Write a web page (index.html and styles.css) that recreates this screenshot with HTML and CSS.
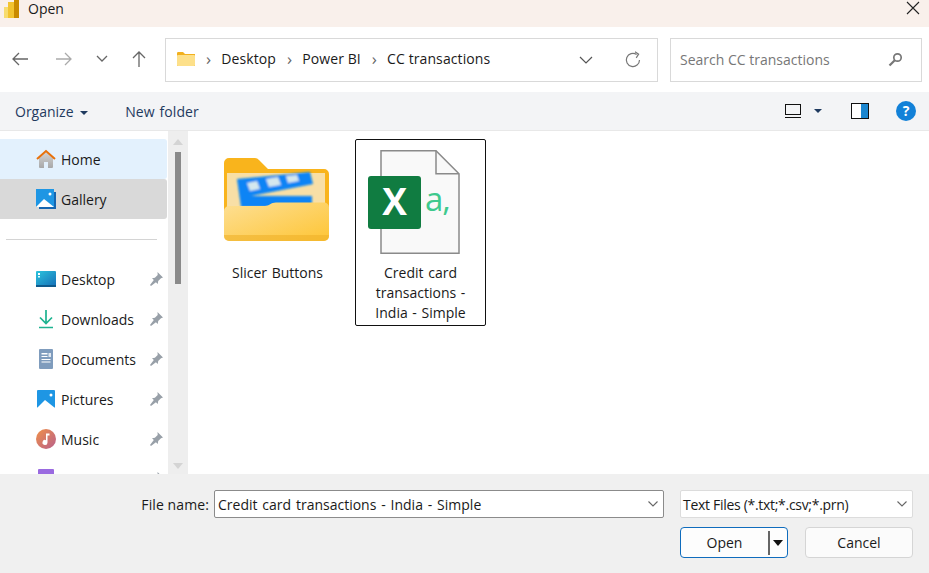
FILE: index.html
```html
<!DOCTYPE html>
<html lang="en">
<head>
  <meta charset="UTF-8" />
  <title>Open</title>
  <link rel="stylesheet" href="styles.css">
</head>
<body>
  <div class="dialog">
    <div class="titlebar">
      <svg class="app-icon" width="15" height="18" viewBox="0 0 15 18"><rect x="10" y="-4" width="5" height="22" fill="#c98a00"/><rect x="4" y="2" width="6" height="16" fill="#f2c330"/><rect x="0" y="7" width="4" height="11" fill="#f7dc6f"/></svg>
      <span class="title">Open</span>
      <svg class="close" width="14" height="14" viewBox="0 0 14 14"><path d="M1 1L13 13M13 1L1 13" stroke="#222" stroke-width="1.1" fill="none"/></svg>
    </div>

    <div class="addressbar">
      <div class="navbtns">
        <svg width="18" height="16" viewBox="0 0 18 16"><path d="M17 8H2M8 2L2 8l6 6" stroke="#666" stroke-width="1.3" fill="none"/></svg>
        <svg width="18" height="16" viewBox="0 0 18 16"><path d="M1 8h15M10 2l6 6-6 6" stroke="#aaa" stroke-width="1.3" fill="none"/></svg>
        <svg width="12" height="8" viewBox="0 0 12 8"><path d="M1 1l5 5 5-5" stroke="#666" stroke-width="1.3" fill="none"/></svg>
        <svg width="16" height="18" viewBox="0 0 16 18"><path d="M8 17V2M2 8l6-6 6 6" stroke="#666" stroke-width="1.3" fill="none"/></svg>
      </div>
      <div class="path">
        <svg width="18" height="14" viewBox="0 0 18 14"><path d="M0 1.500C0 .7.5 0 1 0h5l2 2h10v12H1c-.6 0-1-.5-1-1z" fill="#f2b01e"/><rect y="3" width="18" height="11" rx="1" fill="#fde08a"/></svg>
        <span class="sep">›</span><span>Desktop</span>
        <span class="sep">›</span><span>Power BI</span>
        <span class="sep">›</span><span>CC transactions</span>
        <svg class="path-down" width="14" height="8" viewBox="0 0 14 8"><path d="M1 1l6 6 6-6" stroke="#555" stroke-width="1.2" fill="none"/></svg>
        <svg class="refresh" width="18" height="18" viewBox="0 0 18 18"><path d="M15.500 9A6.600 6.600 0 1 1 12.600 3.500" stroke="#777" stroke-width="1.2" fill="none"/><path d="M11 .8l3.600 2.400-2.400 3.600" stroke="#777" stroke-width="1.2" fill="none"/></svg>
      </div>
      <div class="search">
        <span>Search CC transactions</span>
        <svg width="15" height="15" viewBox="0 0 15 15"><circle cx="9.500" cy="5.500" r="3.700" stroke="#777" stroke-width="1.700" fill="none"/><path d="M6.800 8.200L1.500 13.500" stroke="#777" stroke-width="2.200"/></svg>
      </div>
    </div>

    <div class="toolbar">
      <span class="tool">Organize <i class="caret"></i></span>
      <span class="tool new-folder">New folder</span>
      <div class="tool-icons">
        <svg width="16" height="16" viewBox="0 0 16 16"><rect x=".5" y="1.500" width="15" height="10" fill="none" stroke="#111"/><path d="M0 14.500h16" stroke="#111"/></svg>
        <i class="caret view-caret"></i>
        <svg class="preview" width="18" height="16" viewBox="0 0 18 16"><rect x=".5" y=".5" width="17" height="15" fill="#fff" stroke="#111"/><rect x="10" y="1" width="7" height="14" fill="#1a86d0"/></svg>
        <span class="help">?</span>
      </div>
    </div>

    <div class="main">
      <nav class="sidebar">
        <a class="nav-item hover">
          <svg width="20" height="20" viewBox="0 0 20 20"><defs><linearGradient id="house" x1="0" y1="0" x2="0" y2="1"><stop offset="0" stop-color="#d4d4d4"/><stop offset="1" stop-color="#a8a8a8"/></linearGradient></defs><path d="M3 9l7-6 7 6v9a1 1 0 0 1-1 1h-4v-6H8v6H4a1 1 0 0 1-1-1z" fill="url(#house)"/><path d="M1 10l9-8 9 8" stroke="#e8710a" stroke-width="2" fill="none"/></svg>
          <span>Home</span>
        </a>
        <a class="nav-item active">
          <svg width="20" height="20" viewBox="0 0 20 20"><rect x="3" y="3" width="17" height="17" fill="#1565b0"/><rect width="18" height="18" fill="#1e96e4"/><path d="M0 18l8-8 10 8z" fill="#fff"/><circle cx="14" cy="5" r="1.500" fill="#fff"/></svg>
          <span>Gallery</span>
        </a>
        <div class="divider"></div>
        <a class="nav-item">
          <svg width="20" height="16" viewBox="0 0 20 16"><defs><linearGradient id="desk" x1="0" y1="0" x2="1" y2="1"><stop offset="0" stop-color="#2cc4dd"/><stop offset="1" stop-color="#1670b8"/></linearGradient></defs><rect width="20" height="15" rx="1" fill="url(#desk)"/><rect y="14" width="20" height="2" fill="#0f5a8c"/><rect x="2" y="2" width="2" height="2" fill="#fff"/><rect x="2" y="5" width="2" height="1.500" fill="#dff"/></svg>
          <span>Desktop</span>
          <svg class="pin" width="14" height="14" viewBox="0 0 14 14"><path d="M8.500 0L14 5.500l-2 .8-2.800 2.800-.4 2.900L6.900 10.200 2 14l-1-1 3.800-4.900L3 6.200l2.900-.4 2.800-2.800z" fill="#98a0a8"/></svg>
        </a>
        <a class="nav-item">
          <svg width="20" height="20" viewBox="0 0 20 20"><path d="M10 1v13M4 8.500l6 6 6-6" stroke="#1db390" stroke-width="1.700" fill="none"/><path d="M3 18.500h14" stroke="#1db390" stroke-width="1.500"/></svg>
          <span>Downloads</span>
          <svg class="pin" width="14" height="14" viewBox="0 0 14 14"><path d="M8.500 0L14 5.500l-2 .8-2.800 2.800-.4 2.900L6.900 10.200 2 14l-1-1 3.800-4.900L3 6.200l2.900-.4 2.800-2.800z" fill="#98a0a8"/></svg>
        </a>
        <a class="nav-item">
          <svg width="20" height="20" viewBox="0 0 20 20"><rect x="3" y="0" width="14" height="20" rx="1" fill="#7f9cbd"/><path d="M5.500 4h6v1.500h-6zM5.500 7h6v1h-6zM5.500 10h9v1h-9zM5.500 12.500h9v1h-9z" fill="#fff"/><rect x="12.500" y="4" width="2.500" height="4" fill="#dfe7f0"/></svg>
          <span>Documents</span>
          <svg class="pin" width="14" height="14" viewBox="0 0 14 14"><path d="M8.500 0L14 5.500l-2 .8-2.800 2.800-.4 2.900L6.900 10.200 2 14l-1-1 3.800-4.900L3 6.200l2.900-.4 2.800-2.800z" fill="#98a0a8"/></svg>
        </a>
        <a class="nav-item">
          <svg width="18" height="18" viewBox="0 0 18 18"><rect width="18" height="18" rx="1" fill="#1e96e4"/><path d="M0 18l8-8 10 8z" fill="#fff"/><circle cx="14" cy="5" r="1.500" fill="#fff"/></svg>
          <span>Pictures</span>
          <svg class="pin" width="14" height="14" viewBox="0 0 14 14"><path d="M8.500 0L14 5.500l-2 .8-2.800 2.800-.4 2.900L6.900 10.200 2 14l-1-1 3.800-4.900L3 6.200l2.900-.4 2.800-2.800z" fill="#98a0a8"/></svg>
        </a>
        <a class="nav-item">
          <svg width="20" height="20" viewBox="0 0 20 20"><defs><linearGradient id="mus" x1="0" y1="0" x2="1" y2="1"><stop offset="0" stop-color="#f09048"/><stop offset="1" stop-color="#b8608c"/></linearGradient></defs><circle cx="10" cy="10" r="10" fill="url(#mus)"/><path d="M10 4.500h3.500v2H11.500v7a2.500 2.500 0 1 1-1.500-2.300z" fill="#fff"/></svg>
          <span>Music</span>
          <svg class="pin" width="14" height="14" viewBox="0 0 14 14"><path d="M8.500 0L14 5.500l-2 .8-2.800 2.800-.4 2.900L6.900 10.200 2 14l-1-1 3.800-4.900L3 6.200l2.900-.4 2.800-2.800z" fill="#98a0a8"/></svg>
        </a>
        <a class="nav-item">
          <svg width="16" height="20" viewBox="0 0 16 20"><rect width="16" height="20" rx="1" fill="#9a6ae0"/></svg>
          <svg class="pin" width="14" height="14" viewBox="0 0 14 14"><path d="M8.500 0L14 5.500l-2 .8-2.800 2.800-.4 2.900L6.900 10.200 2 14l-1-1 3.800-4.900L3 6.200l2.900-.4 2.800-2.800z" fill="#98a0a8"/></svg>
        </a>
      </nav>

      <div class="scrollbar">
        <i class="arrow-up"></i>
        <div class="thumb"></div>
        <i class="arrow-down"></i>
      </div>

      <div class="files">
        <div class="tile">
          <svg class="folder-icon" width="105" height="84" viewBox="0 0 105 84">
            <defs>
              <linearGradient id="front" x1="0" y1="0" x2="1" y2="1"><stop offset="0" stop-color="#fddf94"/><stop offset="1" stop-color="#fec535"/></linearGradient>
              <filter id="soft"><feGaussianBlur stdDeviation=".8"/></filter>
            </defs>
            <path d="M0 5a5 5 0 0 1 5-5h26a6 6 0 0 1 4 2l9 9h56a5 5 0 0 1 5 5v40H0z" fill="#f9b41c"/>
            <rect x="3" y="15" width="98" height="36" fill="#f8dfa6"/>
            <g filter="url(#soft)">
              <path d="M13 21l73-7 3 12-62 12h61v11H17z" fill="#0a84f5"/>
              <path d="M23 25l10-2 3 8-10 2zM42 21l12-2 3 8-12 2zM62 18l11-1 2 6-11 2z" fill="#d5e8ee"/>
            </g>
            <path d="M0 53a5 5 0 0 1 5-5h36c4 0 6-3.500 11-3.500h48a5 5 0 0 1 5 5V78a5 5 0 0 1-5 5H5a5 5 0 0 1-5-5z" fill="url(#front)"/>
            <path d="M0 78a5 5 0 0 0 5 5h95a5 5 0 0 0 5-5v-1H0z" fill="#eeb02a" opacity=".6"/>
          </svg>
          <div class="tile-name folder-name">Slicer Buttons</div>
        </div>
        <div class="tile selected">
          <svg class="doc-icon" width="92" height="105" viewBox="0 0 92 105">
            <path d="M13 .75h55l23 23v79.500H13z" fill="#f9f9f9" stroke="#8a8a8a" stroke-width="1.500"/>
            <path d="M68 .75v23h23" fill="none" stroke="#8a8a8a" stroke-width="1.500"/>
            <rect x="0" y="26" width="53" height="53" rx="3" fill="#107c41"/>
            <text class="xl-x" x="26.500" y="65" text-anchor="middle">X</text>
            <text class="xl-a" x="57" y="61">a,</text>
          </svg>
          <div class="tile-name doc-name">Credit card transactions - India - Simple</div>
        </div>
      </div>
    </div>

    <div class="footer">
      <div class="footer-row">
        <label class="file-label">File name:</label>
        <div class="field name-field"><span>Credit card transactions - India - Simple</span><svg width="10" height="6" viewBox="0 0 10 6"><path d="M.5.5l4.500 4.500 4.500-4.500" stroke="#666" stroke-width="1.100" fill="none"/></svg></div>
        <div class="field type-field"><span>Text Files (*.txt;*.csv;*.prn)</span><svg width="10" height="6" viewBox="0 0 10 6"><path d="M.5.5l4.500 4.500 4.500-4.500" stroke="#666" stroke-width="1.100" fill="none"/></svg></div>
      </div>
      <div class="footer-row buttons">
        <button class="btn open-btn"><span class="open-text">Open</span><span class="open-split"></span><i class="open-caret"></i></button>
        <button class="btn">Cancel</button>
      </div>
    </div>
  </div>
</body>
</html>
```

FILE: styles.css
```css
html, body {
  margin: 0;
  height: 100%;
  overflow: hidden;
}
body {
  font-family: "Open Sans", "Noto Sans", sans-serif;
  font-size: 14px;
  color: #1a1a1a;
  background: #fff;
}
.dialog {
  width: 929px;
  height: 573px;
  display: flex;
  flex-direction: column;
}
.titlebar {
  height: 27px;
  flex: none;
  background: #f9f0eb;
  display: flex;
  align-items: flex-start;
  padding: 0 9px 0 4px;
  box-sizing: border-box;
  overflow: hidden;
}
.app-icon {
  margin-right: 9px;
}
.title {
  line-height: 18px;
}
.close {
  margin-left: auto;
  margin-top: 1px;
}
.addressbar {
  height: 65px;
  flex: none;
  display: flex;
  align-items: center;
  padding: 0 7px 0 11px;
  box-sizing: border-box;
}
.navbtns {
  width: 154px;
  display: flex;
  align-items: center;
  gap: 26px;
  flex: none;
  margin-bottom: 2px;
}
.navbtns svg:nth-child(3) {
  margin-left: -3px;
}
.navbtns svg:nth-child(4) {
  margin-left: -3px;
}
.path, .search {
  height: 44px;
  border: 1px solid #d9d9d9;
  box-sizing: border-box;
  display: flex;
  align-items: center;
}
.path {
  width: 493px;
  padding: 0 15px 2px 11px;
  gap: 9px;
  flex: none;
  letter-spacing: .1px;
}
.sep {
  color: #666;
  font-size: 17px;
  line-height: 20px;
  margin: 0 1px 0 2px;
}
.path-down {
  margin: 2px 22px 0 auto;
}
.refresh {
  margin-top: 2px;
}
.search {
  width: 252px;
  margin-left: 12px;
  padding: 0 18px 0 9px;
  justify-content: space-between;
  color: #777;
}
.toolbar {
  height: 38px;
  flex: none;
  background: #f3f4f6;
  display: flex;
  align-items: center;
  padding: 0 13px 0 15px;
  box-sizing: border-box;
  color: #1f3a5f;
}
.caret {
  display: inline-block;
  border: 4px solid transparent;
  border-top: 4px solid #1f3a5f;
  border-bottom: 0;
  vertical-align: 2px;
  margin-left: 3px;
}
.new-folder {
  margin-left: 37px;
  word-spacing: 1px;
  letter-spacing: .1px;
}
.tool-icons {
  margin-left: auto;
  display: flex;
  align-items: center;
}
.view-caret {
  margin-left: 13px;
  vertical-align: 0;
}
.preview {
  margin-left: 29px;
}
.help {
  width: 20px;
  height: 20px;
  border-radius: 50%;
  background: #1281d8;
  color: #fff;
  font-weight: 700;
  font-size: 14px;
  line-height: 20px;
  text-align: center;
  margin-left: 27px;
}
.main {
  flex: 1;
  min-height: 0;
  display: flex;
  border-top: 1px solid #e8e8e8;
}
.sidebar {
  width: 168px;
  flex: none;
  overflow: hidden;
  padding-top: 8px;
  box-sizing: border-box;
}
.nav-item {
  height: 40px;
  display: flex;
  align-items: center;
  padding: 0 4px 0 36px;
  margin-right: 1px;
  box-sizing: border-box;
}
.nav-item > svg:first-child {
  width: 20px;
  flex: none;
  margin-right: 5px;
}
.nav-item.hover {
  background: #e3f1fd;
  border-radius: 0 3px 3px 0;
}
.nav-item.active {
  background: #d9d9d9;
  border-radius: 0 3px 3px 0;
}
.pin {
  margin-left: auto;
}
.divider {
  height: 1px;
  background: #d4d4d4;
  margin: 20px 11px 19px 6px;
}
.scrollbar {
  width: 20px;
  flex: none;
  background: #eeeeee;
  display: flex;
  flex-direction: column;
  align-items: center;
  padding-top: 8px;
  box-sizing: border-box;
}
.arrow-up {
  border: 5px solid transparent;
  border-bottom: 6px solid #d4d4d4;
  border-top: 0;
}
.thumb {
  width: 6px;
  height: 132px;
  background: #8a8a8a;
  margin-top: 7px;
}
.arrow-down {
  border: 5px solid transparent;
  border-top: 6px solid #d4d4d4;
  border-bottom: 0;
  margin-top: auto;
  margin-bottom: 5px;
}
.files {
  flex: 1;
  display: flex;
  align-items: flex-start;
  gap: 12px;
  padding: 8px 0 0 24px;
}
.tile {
  width: 131px;
  height: 187px;
  box-sizing: border-box;
  border: 1px solid transparent;
  border-radius: 2px;
  display: flex;
  flex-direction: column;
  align-items: center;
}
.tile.selected {
  border-color: #111;
}
.folder-icon {
  flex: none;
  margin: 18px 0 0 -2px;
}
.doc-icon {
  flex: none;
  margin: 10px 0 0 -14px;
}
.tile-name {
  padding: 0 12px;
  line-height: 20px;
  text-align: center;
  word-spacing: 1px;
}
.folder-name {
  margin-top: 21px;
}
.doc-name {
  margin-top: 8px;
}
.xl-x {
  font-family: "Open Sans", sans-serif;
  font-weight: 700;
  font-size: 37px;
  fill: #fff;
}
.xl-a {
  font-family: "Open Sans", sans-serif;
  font-size: 33px;
  letter-spacing: -1px;
  fill: #3ec98d;
}
.footer {
  height: 99px;
  flex: none;
  background: #f0f0f0;
  box-sizing: border-box;
  padding: 16px 16px 0 0;
}
.footer-row {
  display: flex;
  align-items: center;
}
.file-label {
  width: 209px;
  text-align: right;
  letter-spacing: .1px;
}
.field {
  height: 28px;
  box-sizing: border-box;
  background: #fff;
  display: flex;
  align-items: center;
  justify-content: space-between;
  padding: 0 5px 0 3px;
  border-radius: 2px;
}
.name-field {
  width: 450px;
  margin-left: 5px;
  border: 1px solid #8b8b8b;
  word-spacing: 1.2px;
}
.type-field {
  width: 233px;
  margin-left: 16px;
  border: 1px solid #dcdcdc;
  padding-left: 2px;
  letter-spacing: -.3px;
}
.buttons {
  margin-top: 9px;
  padding-left: 680px;
  gap: 17px;
}
.btn {
  width: 108px;
  height: 31px;
  box-sizing: border-box;
  font: inherit;
  color: inherit;
  background: #fbfbfb;
  border: 1px solid #d5d5d5;
  border-radius: 4px;
  padding: 0;
}
.open-btn {
  display: flex;
  align-items: center;
  border-color: #0f6cbd;
  background: #fdfdfd;
}
.open-text {
  width: 87px;
  text-align: center;
}
.open-split {
  width: 2px;
  height: 24px;
  background: #666;
}
.open-caret {
  border: 5px solid transparent;
  border-top: 6px solid #111;
  border-bottom: 0;
  margin-left: 3px;
}
```
